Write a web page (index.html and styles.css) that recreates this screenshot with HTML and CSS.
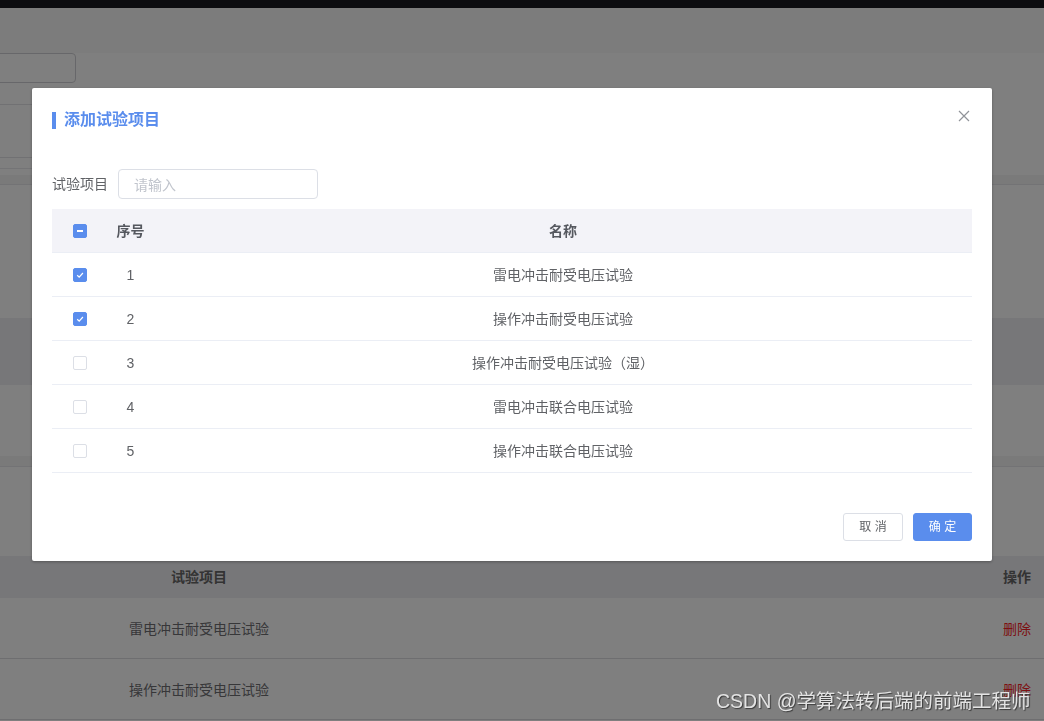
FILE: index.html
```html
<!DOCTYPE html>
<html lang="zh-CN">
<head>
<meta charset="utf-8">
<title>添加试验项目</title>
<link rel="stylesheet" href="styles.css">
</head>
<body>
<div class="page">
  <div class="topbar"></div>
  <div class="toolbar"></div>
  <div class="form-area">
    <div class="bg-input"></div>
    <div class="bg-textarea"></div>
    <div class="bg-line"></div>
  </div>
  <div class="band"></div>
  <div class="blank blank-a"></div>
  <div class="band-dark"></div>
  <div class="blank blank-b"></div>
  <div class="band band-b"></div>
  <div class="blank blank-c"></div>
  <div class="bg-table">
    <div class="bg-row bg-head">
      <div class="bg-c1">试验项目</div>
      <div></div>
      <div class="bg-c3">操作</div>
    </div>
    <div class="bg-row">
      <div class="bg-c1">雷电冲击耐受电压试验</div>
      <div></div>
      <div class="bg-c3 del">删除</div>
    </div>
    <div class="bg-row">
      <div class="bg-c1">操作冲击耐受电压试验</div>
      <div></div>
      <div class="bg-c3 del">删除</div>
    </div>
  </div>
</div>

<div class="mask"></div>

<div class="dialog">
  <div class="dlg-header">
    <div class="dlg-title"><span class="title-bar"></span>添加试验项目</div>
    <svg class="close" width="12" height="12" viewBox="0 0 12 12"><path d="M1 1 L11 11 M11 1 L1 11" stroke="#909399" stroke-width="1.2" fill="none"/></svg>
  </div>
  <div class="dlg-body">
    <div class="form-item">
      <label class="form-label">试验项目</label>
      <div class="input"><span class="placeholder">请输入</span></div>
    </div>
    <div class="table">
      <div class="row head">
        <div class="cell sel"><span class="cb checked"><span class="dash"></span></span></div>
        <div class="cell idx">序号</div>
        <div class="cell name">名称</div>
      </div>
      <div class="row">
        <div class="cell sel"><span class="cb checked"><svg width="10" height="10" viewBox="0 0 10 10"><path d="M2.2 5.2 L4.2 7.1 L7.9 3" stroke="#fff" stroke-width="1.2" fill="none"/></svg></span></div>
        <div class="cell idx">1</div>
        <div class="cell name">雷电冲击耐受电压试验</div>
      </div>
      <div class="row">
        <div class="cell sel"><span class="cb checked"><svg width="10" height="10" viewBox="0 0 10 10"><path d="M2.2 5.2 L4.2 7.1 L7.9 3" stroke="#fff" stroke-width="1.2" fill="none"/></svg></span></div>
        <div class="cell idx">2</div>
        <div class="cell name">操作冲击耐受电压试验</div>
      </div>
      <div class="row">
        <div class="cell sel"><span class="cb"></span></div>
        <div class="cell idx">3</div>
        <div class="cell name">操作冲击耐受电压试验（湿）</div>
      </div>
      <div class="row">
        <div class="cell sel"><span class="cb"></span></div>
        <div class="cell idx">4</div>
        <div class="cell name">雷电冲击联合电压试验</div>
      </div>
      <div class="row">
        <div class="cell sel"><span class="cb"></span></div>
        <div class="cell idx">5</div>
        <div class="cell name">操作冲击联合电压试验</div>
      </div>
    </div>
  </div>
  <div class="dlg-footer">
    <button class="btn">取 消</button>
    <button class="btn primary">确 定</button>
  </div>
</div>

<div class="watermark">CSDN @学算法转后端的前端工程师</div>
</body>
</html>
```

FILE: styles.css
```css
* { box-sizing: border-box; }
html, body { margin: 0; padding: 0; }
body {
  width: 1044px;
  height: 721px;
  overflow: hidden;
  font-family: "Liberation Sans", "Noto Sans CJK SC", sans-serif;
  font-size: 14px;
  color: #606266;
  background: #fff;
}

/* ---------- background page (drawn unmasked, mask on top) ---------- */
.page { display: flex; flex-direction: column; width: 1044px; }
.topbar { height: 8px; background: #18181e; }
.toolbar { height: 45px; background: #f8f8f8; }
.form-area { height: 122px; position: relative; background: #fff; }
.bg-input {
  width: 160px; height: 30px; margin-left: -84px;
  border: 1px solid #cfcfd4; border-radius: 4px;
}
.bg-textarea {
  width: 560px; height: 54px; margin-top: 21px; margin-left: -10px;
  border: 1px solid #e2e2e6; border-radius: 0;
}
.bg-line { height: 1px; margin-top: 10px; width: 600px; background: #e8e8ec; }
.band { height: 10px; background: #f4f4f4; border-bottom: 1px solid #e6e6ea; }
.blank { background: #fff; }
.blank-a { height: 133px; }
.band-dark { height: 67px; background: #eeeef2; }
.blank-b { height: 71px; }
.band-b { height: 11px; }
.blank-c { height: 89px; }
.bg-table { display: flex; flex-direction: column; }
.bg-row {
  display: grid;
  grid-template-columns: 398px 1fr 54px;
  align-items: center;
  height: 61px;
  border-bottom: 1px solid #dcdce0;
  color: #6e6e72;
  font-size: 14px;
}
.bg-head { height: 42px; background: #efeff3; border-bottom: none; color: #666; font-weight: bold; padding-bottom: 3px; }
.bg-c1 { text-align: center; }
.bg-c3 { text-align: center; }
.del { color: #fa1e26; }

.mask {
  position: fixed; left: 0; top: 0; right: 0; bottom: 0;
  background: rgba(0, 0, 0, 0.5);
}

/* ---------- dialog ---------- */
.dialog {
  position: fixed;
  left: 32px; top: 88px;
  width: 960px; height: 473px;
  background: #fff;
  border-radius: 2px;
  box-shadow: 0 1px 3px rgba(0, 0, 0, 0.3);
  display: flex; flex-direction: column;
}
.dlg-header {
  padding: 20px 20px 10px;
  display: flex; align-items: flex-start; justify-content: space-between;
}
.dlg-title {
  display: flex; align-items: center;
  height: 24px; line-height: 24px;
  font-size: 16px; font-weight: bold; color: #5a8ded;
}
.title-bar {
  display: inline-block; width: 4px; height: 17px;
  background: #5a8ded; margin-right: 8px;
}
.close { margin-top: 2px; margin-right: 2px; }

.dlg-body { padding: 27px 20px 30px; }
.form-item { display: flex; align-items: center; gap: 10px; margin-bottom: 10px; }
.form-label { line-height: 30px; font-size: 14px; color: #606266; }
.input {
  width: 200px; height: 30px;
  border: 1px solid #dcdfe6; border-radius: 4px;
  padding: 0 15px;
  display: flex; align-items: center;
}
.placeholder { color: #c0c4cc; font-size: 14px; }

.table { display: flex; flex-direction: column; }
.row {
  display: grid;
  grid-template-columns: 55px 47px 1fr;
  height: 44px;
  border-bottom: 1px solid #ebeef5;
  align-items: center;
  font-size: 14px; color: #606266;
}
.row.head {
  background: #f3f3f8;
  font-weight: bold; color: #55585f;
}
.cell { text-align: center; line-height: 20px; }
.cell.sel { display: flex; justify-content: center; }
.cb {
  width: 14px; height: 14px;
  border: 1px solid #dcdfe6; border-radius: 2px; background: #fff;
  display: inline-flex; align-items: center; justify-content: center;
}
.cb.checked { background: #5a8ded; border-color: #5a8ded; }
.dash { width: 6px; height: 2px; background: #fff; }

.dlg-footer {
  padding: 10px 20px 20px;
  display: flex; justify-content: flex-end; gap: 10px;
}
.btn {
  height: 28px; padding: 0;
  font-family: "Liberation Sans", "Noto Sans CJK SC", sans-serif;
  font-size: 12px; line-height: 26px;
  border: 1px solid #dcdfe6; border-radius: 3px;
  background: #fff; color: #606266;
  width: 60px;
  white-space: nowrap; text-align: center;
}
.btn.primary { background: #5a8ded; border-color: #5a8ded; color: #fff; width: 59px; }

.watermark {
  position: fixed; left: 716px; top: 688px;
  font-family: "Liberation Sans", "Noto Sans CJK SC", sans-serif;
  font-size: 19.5px; line-height: 26px;
  color: #e4e4e4;
  text-shadow: 1px 1px 1px #3a3a3a;
  white-space: nowrap;
}
```
